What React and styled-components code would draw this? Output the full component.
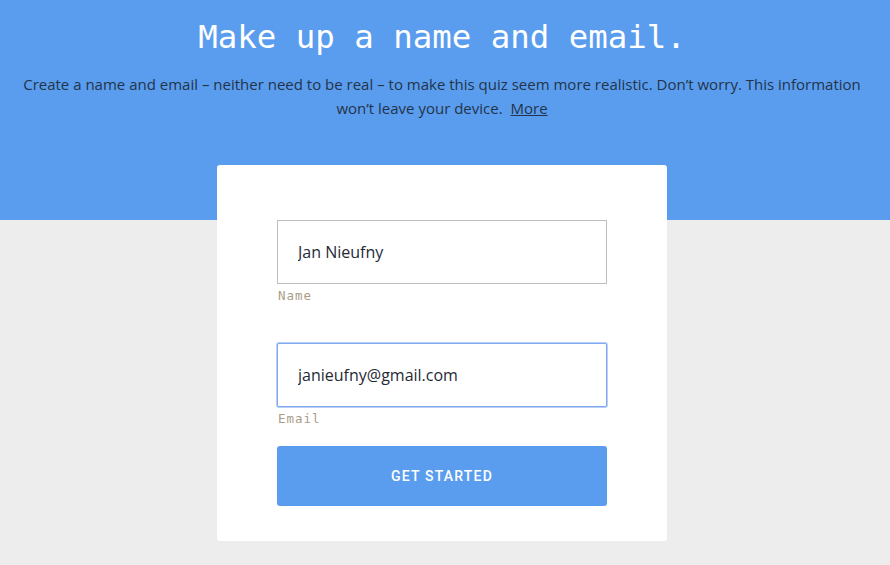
import React, { useEffect, useRef, useState } from "react";
import styled, { createGlobalStyle } from "styled-components";

const GlobalStyle = createGlobalStyle`
  * { box-sizing: border-box; }
  body {
    margin: 0;
    background: #ededed;
    font-family: "Open Sans", sans-serif;
  }
`

const App = () => {
    const [name, setName] = useState("Jan Nieufny")
    const [email, setEmail] = useState("janieufny@gmail.com")
    const emailRef = useRef(null)

    useEffect(() => {
        const el = emailRef.current
        if (el) {
            el.focus()
            el.setSelectionRange(el.value.length, el.value.length)
        }
    }, [])

    return (
        <Page>
            <GlobalStyle />
            <Header>
                <Title>Make up a name and email.</Title>
                <Intro>
                    Create a name and email – neither need to be real – to make this quiz seem more realistic. Don’t worry. This information won’t leave your device. <MoreLink href="#">More</MoreLink>
                </Intro>
            </Header>
            <Card>
                <Field gap={40}>
                    <Input value={name} onChange={e => setName(e.target.value)} />
                    <Label>Name</Label>
                </Field>
                <Field gap={20}>
                    <Input ref={emailRef} value={email} onChange={e => setEmail(e.target.value)} />
                    <Label>Email</Label>
                </Field>
                <StartButton>Get started</StartButton>
            </Card>
        </Page>
    )
}

const Page = styled.div`
  display: flex;
  flex-direction: column;
  align-items: center;
  min-height: 565px;
`

const Header = styled.header`
  width: 100%;
  height: 220px;
  background-color: #5a9dee;
  display: flex;
  flex-direction: column;
  align-items: center;
  padding: 17px 26px 0 20px;
`

const Title = styled.h1`
  margin: 0;
  font-family: "DejaVu Sans Mono", monospace;
  font-size: 32.4px;
  font-weight: normal;
  line-height: 40px;
  color: #fff;
`

const Intro = styled.p`
  margin: 15px 0 0;
  text-align: center;
  font-size: 15px;
  line-height: 24px;
  color: #23344a;
`

const MoreLink = styled.a`
  color: #23344a;
  text-decoration: underline;
  margin-left: 4px;
`

const Card = styled.div`
  width: 450px;
  margin: -55px 6px 0 0;
  background: #fff;
  border-radius: 3px;
  padding: 55px 60px 35px;
  display: flex;
  flex-direction: column;
`

const Field = styled.div`
  display: flex;
  flex-direction: column;
  margin-bottom: ${props => props.gap}px;
`

const Input = styled.input`
  width: 330px;
  height: 64px;
  border: 1px solid #bdbdbd;
  border-radius: 0;
  padding: 0 20px;
  font-family: "Open Sans", sans-serif;
  font-size: 16px;
  color: #1f2a36;
  caret-color: #111;
  outline: none;

  &:focus {
    border-color: #80a9f2;
    border-radius: 2px;
    box-shadow: 0 0 0 1px #b7cff5;
  }
`

const Label = styled.span`
  margin-top: 5px;
  padding-left: 1px;
  font-family: "DejaVu Sans Mono", monospace;
  font-size: 12.5px;
  line-height: 14px;
  letter-spacing: 1px;
  color: #ab9c8a;
`

const StartButton = styled.button`
  width: 330px;
  height: 60px;
  border: none;
  border-radius: 3px;
  background: #5a9dee;
  color: #fff;
  font-family: Roboto, sans-serif;
  font-weight: 500;
  font-size: 14px;
  letter-spacing: 1.2px;
  text-transform: uppercase;
  cursor: pointer;
`

export default App
